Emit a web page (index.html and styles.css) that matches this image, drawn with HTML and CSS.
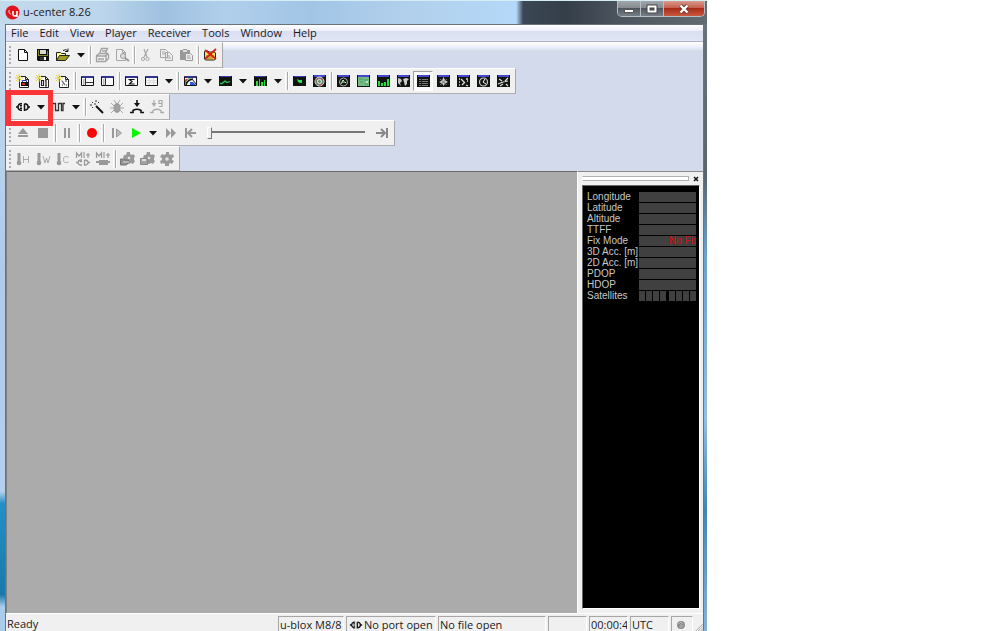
FILE: index.html
```html
<!DOCTYPE html>
<html lang="en">
<head>
<meta charset="utf-8">
<title>u-center 8.26</title>
<link rel="stylesheet" href="styles.css">
</head>
<body>
<svg class="sprite" aria-hidden="true">
  <symbol id="new" viewBox="0 0 16 16"><path d="M3.500 2.500h6l3 3v8h-9zM9.500 2.500v3h3" fill="#fff" stroke="#111"/></symbol>
  <symbol id="save" viewBox="0 0 16 16"><path d="M2 2h12v12H3l-1-1z" fill="#111"/><path d="M5 3h6v4H5z" fill="#d8d8d0"/><path d="M3 8h10v1H3zM3 3h1v5H3zM12 4h1v4h-1z" fill="#85852a"/><path d="M5 10h6v3H5z" fill="#333"/><path d="M9 10h2v3H9z" fill="#fff"/></symbol>
  <symbol id="open" viewBox="0 0 16 16"><path d="M1.500 13.500v-8h4l1 1h4v2" fill="#ffffa0" stroke="#222"/><path d="M1.500 13.500l3-5h10l-4 5z" fill="#a39d22" stroke="#222"/><path d="M8 3.500q3-2 5 .5m0-2.500v3h-3" fill="none" stroke="#222"/></symbol>
  <symbol id="print" viewBox="0 0 16 16"><path d="M5.500 6.500l2-5h6l-2 5M2.500 8.500l3-2h8l1 1v4l-3 3h-9zM2 9h9l3-2M4 12h6m2-3v5M8 4h4" fill="none" stroke="#a2a2a2" stroke-width="1.300"/></symbol>
  <symbol id="preview" viewBox="0 0 16 16"><path d="M2.500 2.500h6l3 3v8h-9zM8.500 2.500v3h3" fill="none" stroke="#a5a5a5"/><circle cx="9" cy="9" r="2.500" fill="#ddd" stroke="#999"/><path d="M11 11l4 3" stroke="#999" stroke-width="2"/></symbol>
  <symbol id="cut" viewBox="0 0 16 16"><path d="M6 2l3 8m1-8L6 10" stroke="#aaa" fill="none" stroke-width="1.300"/><circle cx="5" cy="12" r="1.600" fill="none" stroke="#aaa"/><circle cx="9.500" cy="12" r="1.600" fill="none" stroke="#aaa"/></symbol>
  <symbol id="copy" viewBox="0 0 16 16"><path d="M2.500 2.500h5l2 2v6h-7zM7.500 5.500h4l3 3v5h-7zM4 5h3M4 7h3m2 2h3m-3 2h4" fill="none" stroke="#a5a5a5"/></symbol>
  <symbol id="paste" viewBox="0 0 16 16"><path d="M2 3h3V2h4v1h3v10H2z" fill="#999"/><path d="M5 3h4v2H5z" fill="#ddd"/><path d="M7.500 6.500h5l2 2v5h-7zM9 9h3m-3 2h4" fill="#eee" stroke="#999"/></symbol>
  <symbol id="delete" viewBox="0 0 16 16"><path d="M2.500 4.500l2-1 3 1.500h5l1 1v6l-1 1h-9l-1-1z" fill="#ffe34a" stroke="#222"/><path d="M4 9h8M5 11h6" stroke="#8a7320"/><path d="M3 3l11 9M14 2L3 12" stroke="#d4201c" stroke-width="1.800"/></symbol>
  <symbol id="sparkpage" viewBox="0 0 16 16"><path d="M4.500 3.500h6l3 3v8h-9zM10.500 3.500v3h3" fill="#fff" stroke="#222"/><path d="M1 2l6 6M7 2L1 8M4 1v8M0 5h8" stroke="#e0d24e"/></symbol>
  <symbol id="page1" viewBox="0 0 16 16"><use href="#sparkpage"/><path d="M6 9h7v4H6z" fill="#111"/><path d="M7.500 9V7.500h4V9" stroke="#2638ad" fill="none"/><path d="M7 10h3v2H7z" fill="#c52e2e"/></symbol>
  <symbol id="page2" viewBox="0 0 16 16"><use href="#sparkpage"/><path d="M6.500 7.500h2v5h-2zM11 7v6M10 8h1m-1 5h2" stroke="#222" fill="none" stroke-width="1.200"/></symbol>
  <symbol id="page3" viewBox="0 0 16 16"><use href="#sparkpage"/><path d="M7 8l3 4m1-4h1M7 12h1m2-4h1m0 4h1" stroke="#777" stroke-width="1.300"/></symbol>
  <symbol id="frame" viewBox="0 0 16 16"><path d="M2.500 3.500h12v9h-12z" fill="#f7f7f7" stroke="#111"/><path d="M3 3h11v2H3z" fill="#33348d"/></symbol>
  <symbol id="split" viewBox="0 0 16 16"><use href="#frame"/><path d="M6.500 5v8M7 9.500h7" fill="none" stroke="#333"/><path d="M4 7h1.500M4 9h1.500M4 11h1.500" stroke="#777"/></symbol>
  <symbol id="side" viewBox="0 0 16 16"><use href="#frame"/><path d="M6.500 5v8" stroke="#333"/><path d="M4 7h1.500M4 9h1.500M4 11h1.500" stroke="#777"/></symbol>
  <symbol id="sum" viewBox="0 0 16 16"><use href="#frame"/><path d="M11 7V6.500H6.500L9 8.500 6.500 11H11v-.5" fill="none" stroke="#111" stroke-width="1.200"/></symbol>
  <symbol id="table" viewBox="0 0 16 16"><use href="#frame"/><path d="M6.500 5v7m4-7v7M3 7.500h11M3 9.500h11" stroke="#dcdcdc"/></symbol>
  <symbol id="dark" viewBox="0 0 16 16"><path d="M2 2h13v12H2z" fill="#10140f"/><path d="M3 2h11v2H3z" fill="#4446cf"/></symbol>
  <symbol id="darkflat" viewBox="0 0 16 16"><path d="M2 3h13v10H2z" fill="#10140f"/><path d="M3 3h11v1H3z" fill="#3a3cb0"/></symbol>
  <symbol id="map" viewBox="0 0 16 16"><use href="#frame"/><path d="M3 12q1-6 7-7H7L3 8z" fill="#25a23f"/><path d="M4 12q1-5 7-6" stroke="#111" fill="none" stroke-width="1.500"/><path d="M8 12V9h3l3 3z" fill="#3157e0"/><path d="M10 6l4 5" stroke="#222"/><path d="M3 8l2-2" stroke="#d33" stroke-width="1.500"/></symbol>
  <symbol id="chart" viewBox="0 0 16 16"><use href="#darkflat"/><path d="M3 10.500h2l3-2.500 2 1.500 3-1" fill="none" stroke="#34c457" stroke-width="1.300"/></symbol>
  <symbol id="bars" viewBox="0 0 16 16"><use href="#darkflat"/><path d="M4 8h2v5H4zM7 6h1v7H7zM9 9h2v4H9zM12 7h1v6h-1z" fill="#21df35"/></symbol>
  <symbol id="deviation" viewBox="0 0 16 16"><use href="#darkflat"/><path d="M6 6l2 1h3v3H9L7 9z" fill="#2ce35c"/></symbol>
  <symbol id="sky" viewBox="0 0 16 16"><use href="#dark"/><circle cx="8.500" cy="8.500" r="4.500" fill="#777" stroke="#ddd"/><circle cx="8.500" cy="8.500" r="2" fill="#4ba361" stroke="#eee"/><path d="M4 7h2M10 6h2M8 12h2" stroke="#df4040"/></symbol>
  <symbol id="sky2" viewBox="0 0 16 16"><use href="#dark"/><circle cx="8.500" cy="9" r="4" fill="none" stroke="#aaa"/><path d="M6 11l2-4 3 3M7 9h3" fill="none" stroke="#ddd"/><path d="M8 8h2v2H8z" fill="#39a549"/></symbol>
  <symbol id="world" viewBox="0 0 16 16"><use href="#dark"/><path d="M3 4h11v9H3z" fill="#71ba83"/><path d="M4 6h4m1 1h4m-8 2h3m2 2h3" stroke="#4e9562"/><path d="M11 8h2v2h-2z" fill="#c3dec9"/></symbol>
  <symbol id="bars2" viewBox="0 0 16 16"><use href="#dark"/><path d="M3 8h2v5H3zM6 10h2v3H6zM9 9h2v4H9zM12 6h2v7h-2z" fill="#21df35"/></symbol>
  <symbol id="globe" viewBox="0 0 16 16"><use href="#dark"/><path d="M3 5l3 1 1 2-2 2 1 3-3-3zM8 6l3-1 3 1-2 2v3l-2 2-1-4z" fill="#ccc"/></symbol>
  <symbol id="list" viewBox="0 0 16 16"><use href="#dark"/><path d="M4 6.500h9M4 8.500h9M4 10.500h9M4 12.500h9" stroke="#777"/><path d="M6.500 5v9" stroke="#222"/></symbol>
  <symbol id="compass" viewBox="0 0 16 16"><use href="#dark"/><path d="M8.500 4l1.500 3L13 9l-3 1.500L8.500 13 7 10.500 4 9l3-1.500z" fill="#ccc"/><path d="M5 6l7 6M12 6l-7 6" stroke="#777"/></symbol>
  <symbol id="speed" viewBox="0 0 16 16"><use href="#dark"/><path d="M4 6h1m6 0h2M4 12h1m-1-3h1M6 6l4 4m-3 2l2-2m2 2l2 1m-1-5h1" stroke="#ddd" stroke-width="1.300"/></symbol>
  <symbol id="clock" viewBox="0 0 16 16"><use href="#dark"/><circle cx="8.500" cy="9" r="4" fill="none" stroke="#ccc" stroke-width="1.200"/><path d="M10 6L8 9l3 2" stroke="#fff" fill="none"/></symbol>
  <symbol id="altitude" viewBox="0 0 16 16"><use href="#dark"/><path d="M3 11l5-2 5-1M4 6l3 2m3 0l3-3M5 13l3-2m3 0l2 2" stroke="#ddd" fill="none" stroke-width="1.200"/></symbol>
  <symbol id="port" viewBox="0 0 16 16"><path d="M1 8h2M7 4.800H5.500Q3 5.500 3 8t2.500 3.200H7M13 8h2M9.500 4.800v6.400Q13 11 13 8T9.500 4.800M5 6.700h2M5 9.300h2" fill="none" stroke="#111" stroke-width="1.500"/></symbol>
  <symbol id="baud" viewBox="0 0 16 16"><path d="M1 11.500h1.500v-7h3v7h3v-7h3v7H13v-7h2" fill="none" stroke="#333" stroke-width="1.300"/></symbol>
  <symbol id="wand" viewBox="0 0 16 16"><path d="M7 7l7 7" stroke="#111" stroke-width="2"/><path d="M3 3l1 1m3-3v2M1 6h2m7-3L9 4M3 9l1-1m1-3h2" stroke="#333"/></symbol>
  <symbol id="bug" viewBox="0 0 16 16"><ellipse cx="8" cy="9" rx="3.500" ry="5" fill="#999"/><path d="M2 4l3 3M14 4l-3 3M1 9h14M2 14l3-3m9 3l-3-3M5 1l2 3m4-3L9 4M6 7h4m-4 4h4" stroke="#aaa"/></symbol>
  <symbol id="download" viewBox="0 0 16 16"><path d="M8 1v5" stroke="#111" stroke-width="1.600"/><path d="M5 4h6L8 8z" fill="#111"/><path d="M1 13.500h3v-2q4-2.500 8 0v2h3" fill="none" stroke="#111" stroke-width="1.600"/></symbol>
  <symbol id="agps" viewBox="0 0 16 16"><path d="M5 1v5M13 4.500h-3V1.500h3v6h-3" fill="none" stroke="#aaa" stroke-width="1.200"/><path d="M2.500 4h5L5 8z" fill="#aaa"/><path d="M1 13.500h3v-2q4-2.500 8 0v2h3" fill="none" stroke="#aaa" stroke-width="1.300"/></symbol>
  <symbol id="eject" viewBox="0 0 16 16"><path d="M8 3l5 6H3zM3 10h10v2H3z" fill="#999"/></symbol>
  <symbol id="stop" viewBox="0 0 16 16"><path d="M3 3h10v10H3z" fill="#999"/></symbol>
  <symbol id="pause" viewBox="0 0 16 16"><path d="M5 3h2v10H5zM9 3h2v10H9z" fill="#999"/></symbol>
  <symbol id="record" viewBox="0 0 16 16"><circle cx="9" cy="8" r="5" fill="#f80505"/></symbol>
  <symbol id="step" viewBox="0 0 16 16"><path d="M5 3h2v10H5z" fill="#999"/><path d="M9.500 4l5 4-5 4z" fill="#bbb" stroke="#999"/></symbol>
  <symbol id="play" viewBox="0 0 16 16"><path d="M5 3l9 5-9 5z" fill="#05f505"/></symbol>
  <symbol id="forward" viewBox="0 0 16 16"><path d="M4 3l5 5-5 5zM9 3l5 5-5 5z" fill="#999"/></symbol>
  <symbol id="first" viewBox="0 0 16 16"><path d="M4 3v10M14 8H6m4-4L6 8l4 4" fill="none" stroke="#999" stroke-width="2"/></symbol>
  <symbol id="last" viewBox="0 0 16 16"><path d="M13 3v10M2 8h9M7 4l4 4-4 4" fill="none" stroke="#888" stroke-width="2"/></symbol>
  <symbol id="thermo" viewBox="0 0 16 16"><path d="M4 2v9" stroke="#999" stroke-width="3"/><circle cx="4" cy="12" r="2.300" fill="#999"/></symbol>
  <symbol id="hot" viewBox="0 0 16 16"><use href="#thermo"/><path d="M8.500 5v7m5-7v7m-5-3.500h5" stroke="#aaa"/></symbol>
  <symbol id="warm" viewBox="0 0 16 16"><use href="#thermo"/><path d="M8 5l2 7 1.500-5L13 12l2-7" fill="none" stroke="#aaa"/></symbol>
  <symbol id="cold" viewBox="0 0 16 16"><use href="#thermo"/><path d="M13.500 6q-5-2-5 2.500t5 2.500" fill="none" stroke="#aaa"/></symbol>
  <symbol id="mplus" viewBox="0 0 16 16"><path d="M1.500 7V2L4 5l2.500-3v5m2.500-6v6m2-3h4m-2-2v5" fill="none" stroke="#999" stroke-width="1.200"/></symbol>
  <symbol id="mport" viewBox="0 0 16 16"><use href="#mplus"/><path d="M1 11.500h2M7 9H5.500Q3 9.500 3 11.500T5.500 14H7m-2-3.500h2M9.500 9v5q3.500 0 3.500-2.500T9.500 9M13 11.500h2" fill="none" stroke="#999" stroke-width="1.300"/></symbol>
  <symbol id="mchip" viewBox="0 0 16 16"><use href="#mplus"/><path d="M1 10h3V9h9v1h2v2h-2v2H4v-2H1z" fill="#999"/></symbol>
  <symbol id="gear" viewBox="0 0 16 16"><path d="M7 1h3v2l2 1 2-1 1 3-2 1v2l2 1-2 3-2-1-1 1v2H6v-2l-2-1-2 1-1-3 2-1V7L1 6l2-3 2 1 2-1z" fill="#999"/><circle cx="8" cy="8" r="1.800" fill="#e4e4e4"/></symbol>
  <symbol id="gearsmall" viewBox="0 0 16 16"><path d="M8 1h3v2l2 1 1-1 2 2-1 2v2l1 1-2 3-2-1-2 1H7L4 7l1-3 2 0z" fill="#999"/><circle cx="10" cy="7" r="1.300" fill="#e4e4e4"/></symbol>
  <symbol id="gearload" viewBox="0 0 16 16"><use href="#gearsmall"/><path d="M1.500 14V8h3l1 1h4v2l-2 3z" fill="#909090" stroke="#777"/><path d="M4 11h6" stroke="#ddd"/></symbol>
  <symbol id="gearsave" viewBox="0 0 16 16"><use href="#gearsmall"/><path d="M1.500 7.500h7v6h-7z" fill="#a5a5a5" stroke="#888"/><path d="M3 8h4v2H3z" fill="#ddd"/></symbol>
  <symbol id="arrow" viewBox="0 0 16 16"><path d="M4 6h8L8 10.500z" fill="#111"/></symbol>
</svg>

<div class="window">
  <header class="titlebar">
    <svg class="logo" viewBox="0 0 15 15" aria-hidden="true"><circle cx="7.500" cy="7.500" r="7" fill="#e2141b"/><path d="M4 5v2q0 2 2 2" fill="none" stroke="#fff" stroke-width=".8"/><path d="M8 6v3q0 2 2 2t2-2V6m0 3v3" fill="none" stroke="#fff" stroke-width="1.600"/></svg>
    <h1 class="title">u-center 8.26</h1>
    <div class="caption">
      <button class="cap" aria-label="Minimize"><svg viewBox="0 0 12 12"><path d="M1.500 6.500h9v3h-9z" fill="#fff" stroke="#555"/></svg></button>
      <button class="cap" aria-label="Maximize"><svg viewBox="0 0 12 12"><path d="M2.500 3.500h7v5h-7z" fill="none" stroke="#444" stroke-width="4"/><path d="M2.500 3.500h7v5h-7z" fill="none" stroke="#fff" stroke-width="2"/></svg></button>
      <button class="cap cap-close" aria-label="Close"><svg viewBox="0 0 12 12"><path d="M2.500 2.500l7 7m0-7l-7 7" stroke="#633" stroke-width="4"/><path d="M2.500 2.500l7 7m0-7l-7 7" stroke="#fff" stroke-width="2.400"/></svg></button>
    </div>
  </header>

  <div class="frame">
    <div class="edge edge-left"></div>
    <div class="client">
      <nav class="menu">
        <button>File</button><button>Edit</button><button>View</button><button>Player</button><button>Receiver</button><button>Tools</button><button>Window</button><button>Help</button>
      </nav>

      <div class="rebar">
        <div class="toolbar" role="toolbar" aria-label="File">
          <button aria-label="New"><svg><use href="#new"/></svg></button>
          <button aria-label="Save"><svg><use href="#save"/></svg></button>
          <button aria-label="Open"><svg><use href="#open"/></svg></button>
          <button class="drop" aria-label="Recent files"><svg><use href="#arrow"/></svg></button>
          <i class="sep"></i>
          <button aria-label="Print"><svg><use href="#print"/></svg></button>
          <button aria-label="Print preview"><svg><use href="#preview"/></svg></button>
          <i class="sep"></i>
          <button aria-label="Cut"><svg><use href="#cut"/></svg></button>
          <button aria-label="Copy"><svg><use href="#copy"/></svg></button>
          <button aria-label="Paste"><svg><use href="#paste"/></svg></button>
          <i class="sep"></i>
          <button aria-label="Clear"><svg><use href="#delete"/></svg></button>
        </div>

        <div class="toolbar" role="toolbar" aria-label="Views">
          <button aria-label="Packet console"><svg><use href="#page1"/></svg></button>
          <button aria-label="Binary console"><svg><use href="#page2"/></svg></button>
          <button aria-label="Text console"><svg><use href="#page3"/></svg></button>
          <i class="sep"></i>
          <button aria-label="Messages view"><svg><use href="#split"/></svg></button>
          <button aria-label="Configuration view"><svg><use href="#side"/></svg></button>
          <i class="sep"></i>
          <button aria-label="Statistic view"><svg><use href="#sum"/></svg></button>
          <button aria-label="Table view"><svg><use href="#table"/></svg></button>
          <button class="drop" aria-label="Table options"><svg><use href="#arrow"/></svg></button>
          <i class="sep"></i>
          <button aria-label="Map view"><svg><use href="#map"/></svg></button>
          <button class="drop" aria-label="Map options"><svg><use href="#arrow"/></svg></button>
          <button aria-label="Chart view"><svg><use href="#chart"/></svg></button>
          <button class="drop" aria-label="Chart options"><svg><use href="#arrow"/></svg></button>
          <button aria-label="Histogram view"><svg><use href="#bars"/></svg></button>
          <button class="drop" aria-label="Histogram options"><svg><use href="#arrow"/></svg></button>
          <i class="sep"></i>
          <button aria-label="Deviation map"><svg><use href="#deviation"/></svg></button>
          <button aria-label="Sky view"><svg><use href="#sky"/></svg></button>
          <i class="sep"></i>
          <button aria-label="Satellite position"><svg><use href="#sky2"/></svg></button>
          <button aria-label="World position"><svg><use href="#world"/></svg></button>
          <button aria-label="Satellite level"><svg><use href="#bars2"/></svg></button>
          <button aria-label="World"><svg><use href="#globe"/></svg></button>
          <button class="pressed" aria-label="Data" aria-pressed="true"><svg><use href="#list"/></svg></button>
          <button aria-label="Compass"><svg><use href="#compass"/></svg></button>
          <button aria-label="Speedometer"><svg><use href="#speed"/></svg></button>
          <button aria-label="Clock"><svg><use href="#clock"/></svg></button>
          <button aria-label="Altimeter"><svg><use href="#altitude"/></svg></button>
        </div>

        <div class="toolbar" role="toolbar" aria-label="Communication">
          <button aria-label="Connect"><svg><use href="#port"/></svg></button>
          <button class="drop" aria-label="Select port"><svg><use href="#arrow"/></svg></button>
          <button aria-label="Baud rate"><svg><use href="#baud"/></svg></button>
          <button class="drop" aria-label="Select baud rate"><svg><use href="#arrow"/></svg></button>
          <i class="sep"></i>
          <button aria-label="Autobauding"><svg><use href="#wand"/></svg></button>
          <button aria-label="Debug messages"><svg><use href="#bug"/></svg></button>
          <button aria-label="Firmware update"><svg><use href="#download"/></svg></button>
          <button aria-label="Legacy firmware update"><svg><use href="#agps"/></svg></button>
          <span class="marker"></span>
        </div>

        <div class="toolbar" role="toolbar" aria-label="Player">
          <button aria-label="Eject"><svg><use href="#eject"/></svg></button>
          <button aria-label="Stop"><svg><use href="#stop"/></svg></button>
          <i class="sep"></i>
          <button aria-label="Pause"><svg><use href="#pause"/></svg></button>
          <i class="sep"></i>
          <button aria-label="Record"><svg><use href="#record"/></svg></button>
          <i class="sep"></i>
          <button aria-label="Step"><svg><use href="#step"/></svg></button>
          <button aria-label="Play"><svg><use href="#play"/></svg></button>
          <button class="drop" aria-label="Play speed"><svg><use href="#arrow"/></svg></button>
          <button aria-label="Fast forward"><svg><use href="#forward"/></svg></button>
          <button aria-label="Go to start"><svg><use href="#first"/></svg></button>
          <input class="seek" type="range" min="0" max="100" value="0" aria-label="Position">
          <button aria-label="Go to end"><svg><use href="#last"/></svg></button>
        </div>

        <div class="toolbar" role="toolbar" aria-label="Action">
          <button aria-label="Hot start"><svg><use href="#hot"/></svg></button>
          <button aria-label="Warm start"><svg><use href="#warm"/></svg></button>
          <button aria-label="Cold start"><svg><use href="#cold"/></svg></button>
          <button aria-label="Port macro"><svg><use href="#mport"/></svg></button>
          <button aria-label="Receiver macro"><svg><use href="#mchip"/></svg></button>
          <i class="sep"></i>
          <button aria-label="Load configuration"><svg><use href="#gearload"/></svg></button>
          <button aria-label="Save configuration"><svg><use href="#gearsave"/></svg></button>
          <button aria-label="Configuration"><svg><use href="#gear"/></svg></button>
        </div>
      </div>

      <main class="work">
        <section class="desk" aria-label="Workspace"></section>
        <aside class="dock">
          <div class="dock-head"><span class="dock-grip"></span><button class="dock-close" aria-label="Close panel"><svg viewBox="0 0 6 6"><path d="M1 1l4 4m0-4L1 5" stroke="#111" stroke-width="1.500"/></svg></button></div>
          <div class="screen">
            <table class="data">
              <tr><th scope="row">Longitude</th><td><div class="val"></div></td></tr>
              <tr><th scope="row">Latitude</th><td><div class="val"></div></td></tr>
              <tr><th scope="row">Altitude</th><td><div class="val"></div></td></tr>
              <tr><th scope="row">TTFF</th><td><div class="val"></div></td></tr>
              <tr><th scope="row">Fix Mode</th><td><div class="val fix">No Fix</div></td></tr>
              <tr><th scope="row">3D Acc. [m]</th><td><div class="val"></div></td></tr>
              <tr><th scope="row">2D Acc. [m]</th><td><div class="val"></div></td></tr>
              <tr><th scope="row">PDOP</th><td><div class="val"></div></td></tr>
              <tr><th scope="row">HDOP</th><td><div class="val"></div></td></tr>
              <tr><th scope="row">Satellites</th><td><div class="sats"><i></i><i></i><i></i><i></i><i class="half"></i><i></i><i></i><i></i></div></td></tr>
            </table>
          </div>
        </aside>
      </main>

      <footer class="status">
        <span class="ready">Ready</span>
        <span class="cell w-receiver">u-blox M8/8</span>
        <span class="cell w-port"><svg><use href="#port"/></svg>No port open</span>
        <span class="cell w-file">No file open</span>
        <span class="cell w-small"></span>
        <span class="cell w-small">00:00:40</span>
        <span class="cell w-small">UTC</span>
        <span class="cell w-led"><svg viewBox="0 0 16 16"><circle cx="8" cy="8" r="4.500" fill="#888"/><path d="M5 7q3-4 5 0m-4 3q3 2 5-2M7 8h2" fill="none" stroke="#ccc"/></svg></span>
        <svg class="sizer" viewBox="0 0 10 10" aria-hidden="true"><path d="M1 10l9-9M4 10l6-6M7 10l3-3" stroke="#999"/></svg>
      </footer>
    </div>
    <div class="edge edge-right"></div>
  </div>
</div>
</body>
</html>
```
FILE: styles.css
```css
* { box-sizing: border-box; }

body {
  margin: 0;
  background: #fff;
  color: #1a1a1a;
  font: 11px/16px "Open Sans", "Noto Sans", sans-serif;
}

button {
  margin: 0;
  padding: 0;
  border: 0;
  background: none;
  color: inherit;
  font: inherit;
}

.sprite { display: none; }

.window {
  display: flex;
  flex-direction: column;
  width: 70.7vw;
  height: 100vh;
  overflow: hidden;
}

/* Title bar */
.titlebar {
  display: flex;
  align-items: flex-start;
  flex: none;
  height: 24px;
  padding-left: 5px;
  border-top: 1px solid #d5eef5;
  background: linear-gradient(90deg, #c3d9ec 0, #bdd6ec 14%, #9fc1e0 23%, #b0cfeb 32%, #a2c5e6 44%, #b2d0ec 58%, #b4d8f8 73%, #3b4754 74%, #343e49 80%, #4d555e 88%, #626a72 100%);
}
.logo { width: 15px; height: 15px; margin-top: 4px; }
.title {
  flex: 1;
  margin: 3px 0 0 3px;
  font-size: 11px;
  font-weight: 400;
  line-height: 16px;
}
.caption {
  display: flex;
  height: 16px;
  margin-right: 2px;
  border: 1px solid #b9bec2;
  border-top: 0;
  border-radius: 0 0 5px 5px;
  overflow: hidden;
}
.cap {
  display: flex;
  align-items: center;
  justify-content: center;
  width: 23px;
  border-right: 1px solid #b9bec2;
  background: linear-gradient(#a0a6aa, #858b90 45%, #50575e 50%, #777f86);
}
.cap svg { width: 12px; height: 12px; }
.cap-close {
  width: 40px;
  border-right: 0;
  background: linear-gradient(#d99a8d, #c4604f 45%, #a92a18 50%, #c95a42);
}

/* Window frame */
.frame { display: flex; flex: 1; min-height: 0; }
.edge { flex: none; }
.edge-left {
  width: 5px;
  background: linear-gradient(#c4dbef, #aecbe8 40%, #b5d0ee 77%, #2390c6 79%, #1a78ac 94%, #a9cdea 96%);
}
.edge-right {
  width: 3px;
  background: linear-gradient(#69737c, #59656f 25%, #68a3d0 38%, #8fbfe5 65%, #3e86ba 80%, #86b4da);
}
.client {
  display: flex;
  flex: 1;
  flex-direction: column;
  min-width: 0;
  border: 1px solid #69737d;
  border-bottom: 0;
  background: #f0f0f0;
}

/* Menu */
.menu {
  display: flex;
  flex: none;
  gap: 11px;
  height: 17px;
  padding-left: 5px;
  border-bottom: 1px solid #b0b4c0;
  background: linear-gradient(#fff, #eef0fa 35%, #d9def1 40%, #e2e6f6);
  line-height: 16px;
}

/* Toolbars */
.rebar {
  flex: none;
  background: linear-gradient(#fff, #e8ecf8 6px, #d3daec 9px, #d3daec);
}
.toolbar {
  display: flex;
  align-items: center;
  position: relative;
  width: max-content;
  height: 26px;
  padding: 0 2px 0 7px;
  border-top: 1px solid #fff;
  border-right: 1px solid #a6a6a6;
  border-bottom: 1px solid #b0b0b0;
  background: #f0f0f0;
}
.toolbar:last-child { height: 25px; }
.toolbar::before {
  content: "";
  flex: none;
  width: 2px;
  height: 18px;
  margin: 0 2px 0 -4px;
  background: repeating-linear-gradient(#aaa 0 2px, transparent 2px 4px);
}
.toolbar button {
  display: flex;
  align-items: center;
  justify-content: center;
  width: 20px;
  height: 20px;
}
.toolbar svg { flex: none; width: 16px; height: 16px; }
.toolbar .drop { width: 15px; }
.toolbar .pressed {
  border: 1px solid #a0a0a0;
  border-right-color: #fff;
  border-bottom-color: #fff;
  background: #fafafa;
}
.sep {
  width: 4px;
  height: 18px;
  border-left: 1px solid transparent;
  background: linear-gradient(90deg, transparent 1px, #aaa 1px 2px, #fff 2px);
}
.marker {
  position: absolute;
  z-index: 1;
  top: -5px;
  left: 0;
  width: 47px;
  height: 36px;
  border: 5px solid #fb3438;
}
.seek {
  appearance: none;
  width: 158px;
  height: 16px;
  margin: 0 7px;
  background: linear-gradient(#777, #777) 0 6px / 100% 2px no-repeat;
}
.seek::-webkit-slider-thumb {
  appearance: none;
  width: 5px;
  height: 12px;
  border: 1px solid #777;
  border-top-color: #fff;
  border-left-color: #fff;
  background: #f0f0f0;
}

/* Work area */
.work { display: flex; flex: 1; min-height: 0; }
.desk {
  flex: 1;
  border-top: 1px solid #696969;
  border-left: 1px solid #808080;
  background: #ababab;
}
.dock {
  display: flex;
  flex: none;
  flex-direction: column;
  width: 126px;
  padding: 2px 3px 4px 4px;
  border-top: 1px solid #888;
  border-left: 1px solid #fff;
}
.dock-head {
  display: flex;
  align-items: center;
  gap: 4px;
  height: 9px;
  margin-bottom: 2px;
}
.dock-grip {
  flex: 1;
  height: 5px;
  border: 1px solid #b0b0b0;
  border-left-color: #fff;
  background: #fff;
}
.dock-close { width: 6px; height: 6px; margin-right: 1px; }
.dock-close svg { display: block; width: 6px; height: 6px; }
.screen {
  flex: 1;
  padding: 5px 3px 0 4px;
  border: 1px solid #666;
  border-right-color: #fff;
  border-bottom-color: #fff;
  background: #000;
  color: #c8c8c8;
  font: 10px/11px "Liberation Sans", Arial, sans-serif;
}
.data { width: 100%; border-collapse: collapse; table-layout: fixed; }
.data th {
  width: 52px;
  height: 11px;
  padding: 0;
  font-weight: 400;
  text-align: left;
  white-space: nowrap;
}
.data td { padding: 0; }
.val { height: 10px; overflow: hidden; background: #404040; line-height: 10px; }
.fix { padding-left: 30px; color: #d90d0d; white-space: nowrap; }
.sats { display: flex; gap: 1px; }
.sats i { flex: 1; height: 10px; background: #404040; }
.sats .half { margin-left: 2px; }

/* Status bar */
.status {
  display: flex;
  flex: none;
  gap: 2px;
  height: 18px;
  padding-top: 2px;
  border-top: 1px solid #fff;
  white-space: nowrap;
}
.ready { flex: 1; padding-left: 1px; }
.cell {
  display: flex;
  align-items: center;
  height: 16px;
  padding-left: 1px;
  border-top: 1px solid #a6a6a6;
  border-left: 1px solid #a6a6a6;
  border-right: 1px solid #fff;
  overflow: hidden;
}
.cell svg { flex: none; width: 16px; height: 14px; }
.w-receiver { width: 66px; }
.w-port { width: 90px; }
.w-file { width: 108px; }
.w-small { width: 39px; }
.w-led { width: 22px; }
.sizer { width: 8px; height: 8px; margin-top: 7px; }
```
